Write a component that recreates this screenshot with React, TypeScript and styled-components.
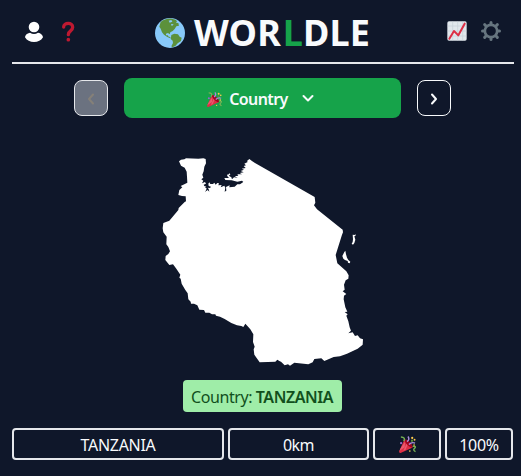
import React from "react";
import styled, { createGlobalStyle } from "styled-components";

const GlobalStyle = createGlobalStyle`
  * { box-sizing: border-box; }
  body {
    margin: 0;
    background: #0f172a;
    color: #f8fafc;
    font-family: "Segoe UI", "Noto Sans", "Open Sans", sans-serif;
    font-size: 16px;
    line-height: 24px;
    overflow: hidden;
  }
  button { font: inherit; color: inherit; margin: 0; padding: 0; }
  svg { display: block; flex: none; }
`;

const Page = styled.main`
  width: 521px;
  height: 476px;
  padding: 0 7px 0 12px;
  display: flex;
  flex-direction: column;
`;

const Header = styled.header`
  height: 64px;
  border-bottom: 2px solid #e5e7eb;
  display: flex;
  align-items: center;
`;

const IconGroup = styled.div<{ $side: "left" | "right" }>`
  width: 100px;
  display: flex;
  align-items: center;
  gap: ${(p) => (p.$side === "left" ? 17 : 14)}px;
  justify-content: ${(p) => (p.$side === "left" ? "flex-start" : "flex-end")};
  padding: ${(p) => (p.$side === "left" ? "1px 0 0 12px" : "0 13px 0 0")};
`;

const IconButton = styled.button`
  border: 0;
  background: none;
  display: flex;
`;

const Title = styled.h1`
  flex: 1;
  margin: 0;
  padding: 3px 0 0 43px;
  display: flex;
  align-items: center;
  gap: 9px;
  font-size: 36px;
  line-height: 40px;
  font-weight: 700;
  white-space: nowrap;
`;

const Wordmark = styled.span`
  letter-spacing: 0.1px;
`;

const Accent = styled.span`
  color: #16a34a;
  margin-left: 2px;
`;

const ModeBar = styled.nav`
  margin-top: 14px;
  padding-left: 62px;
  height: 40px;
  display: flex;
  align-items: center;
  gap: 16px;
`;

const StepButton = styled.button`
  width: 34px;
  height: 36px;
  border: 1px solid #f8fafc;
  border-radius: 8px;
  background: transparent;
  display: flex;
  align-items: center;
  justify-content: center;
  padding-top: 1px;
  &:disabled {
    background: #6b7280;
    border-color: #e5e7eb;
    color: #858078;
  }
`;

const ModeSelect = styled.button`
  width: 277px;
  height: 40px;
  border: 0;
  border-radius: 8px;
  background: #16a34a;
  display: flex;
  align-items: center;
  justify-content: center;
  padding: 2px 4px 0 0;
`;

const ModeLabel = styled.span`
  margin: 0 14px 0 7px;
  font-weight: 600;
  letter-spacing: -0.6px;
`;

const MapArea = styled.section`
  height: 230px;
  margin-top: 32px;
  padding-left: 143px;
`;

const AnswerRow = styled.div`
  display: flex;
  padding-left: 171px;
`;

const Answer = styled.div`
  width: 159px;
  height: 32px;
  border-radius: 4px;
  background: #9feda8;
  color: #11501c;
  padding: 5px 0 0 8px;
  white-space: nowrap;
  letter-spacing: -0.42px;
  strong { font-weight: 600; }
`;

const GuessRow = styled.div`
  margin-top: 16px;
  display: grid;
  grid-template-columns: 212px 141px 68px 68px;
  column-gap: 4px;
`;

const GuessCell = styled.div<{ $spacing?: number }>`
  height: 32px;
  border: 2px solid #e5e7eb;
  border-radius: 4px;
  display: flex;
  align-items: center;
  justify-content: center;
  padding-top: 1px;
  letter-spacing: ${(p) => p.$spacing ?? 0}px;
`;

const Party = ({ size }: { size: number }) => (
  <svg width={size} height={size} viewBox="0 0 36 36">
    <path fill="#dd2e44" d="M11.6 7.6c-.1.2-.3.3-.4.5L.2 32.9c-.5 1.2 1 3.4 3.2 2.9l24.5-11c.3-.1.4-.3.5-.5 1.1-1.8-1.4-6.5-5.6-10.8-4.3-4.2-9-6.7-11.2-5.9z" />
    <path fill="#ea596e" d="M13 12 4 25 .7 31.5 12 24zm5 0-9 19 5-2 5-13z" />
    <path fill="#a0041e" d="M23 13.2c4.2 4.3 6.6 9.1 5.4 10.7-1.8 1-6.6-1.3-10.8-5.6-4.3-4.2-6.7-9-5.5-10.6 1.8-1.2 6.6 1.2 10.9 5.5z" />
    <path fill="none" stroke="#77b255" strokeWidth="3" d="M4 2c7 0 9 4 6 9m19 11c6-1 7 1 4 4s-2 5 2 7" />
    <path fill="none" stroke="#aa8dd8" strokeWidth="3" d="M17 12c4-3 5-7 2-11m2 17c4-4 8-5 13-3" />
    <path fill="#5c913b" d="M25.5 8h4v4h-4z" />
    <circle cx="4.5" cy="15" r="2.5" fill="#9266cc" />
    <g fill="#ffcc4d">
      <circle cx="28" cy="4" r="2.3" />
      <circle cx="33" cy="8" r="2" />
      <circle cx="32" cy="19" r="1.7" />
      <circle cx="23" cy="32" r="1.7" />
    </g>
  </svg>
);

const Globe = () => (
  <svg width="30" height="30" viewBox="0 0 90 90">
    <circle cx="45" cy="45" r="45" fill="#88c9f9" />
    <path fill="#5c913b" d="M17 12C25 5 38 1 50 2l12 3 4 5-3 4 7 1 2 8-8 2-5 8-6 6-7 4-2 6-5-4-6 2 0 5 5 0 3 4 5 1 0 4-9-4-10-7-6-7-4-11-4-6 2-7z" />
    <path fill="#5c913b" d="m49 51 9-4 11 2 5 7 6 3-2 10-10 7-7 8-9 4-3-3 5-10-1-7-6-5 1-5z" />
    <path fill="#88c9f9" d="m41 8 8-2 3 5-8 3zm8 10 7 1-4 4-4-1z" />
  </svg>
);

const Chevron = ({ d, w, h }: { d: string; w: number; h: number }) => (
  <svg width={w} height={h} viewBox={`0 0 ${w} ${h}`} fill="none" stroke="currentColor" strokeWidth="2" strokeLinecap="round" strokeLinejoin="round">
    <path d={d} />
  </svg>
);

const Tanzania = () => (
  <svg width="215" height="220" viewBox="0 0 645 660" fill="#fff">
    <path d="M72 34 78 29 88 28 93 25 130 26 145 25 152 27 153 40 148 50 146 64 142 74 145 83 139 88 145 92 141 100 150 96 153 101 146 104 148 108 154 110 150 113 155 115 153 121 150 126 158 120 163 125 161 117 158 113 165 114 168 110 161 108 160 101 163 97 166 102 174 102 178 98 182 104 187 99 192 100 190 106 200 105 197 112 208 107 211 113 209 125 214 122 213 111 224 106 223 112 239 110 247 103 255 103 265 96 261 92 247 95 230 91 211 90 208 84 222 84 216 77 219 71 224 79 229 82 231 88 237 82 248 83 239 79 250 77 247 73 261 73 254 69 266 67 257 63 267 59 260 56 272 54 266 48 273 46 268 41 278 36 276 33 283 27 292 34 300 39 479 141 481 158 477 166 486 178 563 239 564 247 561 254 542 315 547 340 574 364 581 376 580 386 572 391 567 404 569 419 563 424 574 432 567 437 566 448 571 472 577 485 569 486 578 493 574 497 580 514 584 532 588 542 580 550 593 547 600 558 608 556 615 565 624 568 623 584 608 596 576 611 555 619 536 621 508 633 499 625 478 627 473 637 460 643 418 638 405 647 399 643 389 646 378 635 373 633 367 629 361 635 314 637 298 614 296 598 299 590 294 576 295 553 286 538 278 529 271 521 265 531 259 528 246 526 229 519 209 507 195 500 183 497 181 493 171 493 163 488 151 488 147 480 133 479 127 466 117 461 108 461 107 455 100 448 98 430 91 420 80 401 77 386 73 383 76 374 64 356 54 343 43 345 31 330 32 318 40 312 45 304 40 291 34 283 35 260 25 247 23 235 25 219 43 212 70 180 71 174 89 156 93 154 92 139 81 138 70 135 73 120 82 112 77 108 88 103 97 98 96 80 95 65 89 53 78 47Z" />
    <path d="m593 254 6 1 2-3 1 5-4 2 3 10-3 10-4 5-4-3 3-5 1-8zM562 318l6-12 3-4 2 11 3 10 4 7 6 5-2 5-5-2-1-5-8-3-5-4z" />
    <path d="m220 73 4-3 2 4-3 2z" />
  </svg>
);

export default function App() {
  return (
    <>
      <GlobalStyle />
      <Page>
        <Header>
          <IconGroup $side="left">
            <IconButton aria-label="Profile">
              <svg width="20" height="22" viewBox="0 0 60 66" fill="#fff">
                <circle cx="30" cy="18" r="16" />
                <path d="M18 35q12 8 24 0c11 2 15 10 15 14-6 10-15 14-27 14S9 59 3 49c0-6 5-12 15-14z" />
              </svg>
            </IconButton>
            <IconButton aria-label="How to play">
              <svg width="14" height="22" viewBox="0 0 42 66">
                <path fill="none" stroke="#be1931" strokeWidth="10" strokeLinecap="round" strokeLinejoin="round" d="M8 18C8 4 35 3 35 19 35 31 22 28 22 41" />
                <circle cx="22" cy="56" r="5.500" fill="#be1931" />
              </svg>
            </IconButton>
          </IconGroup>
          <Title>
            <Globe />
            <Wordmark>WOR<Accent>L</Accent>DLE</Wordmark>
          </Title>
          <IconGroup $side="right">
            <IconButton aria-label="Statistics">
              <svg width="20" height="20" viewBox="0 0 60 60">
                <rect x="1" y="1" width="58" height="58" rx="5" fill="#e1e8ed" />
                <path d="M17 2v56M32 2v56M47 2v56M2 15h56M2 30h56M2 45h56" stroke="#c5d0d8" strokeWidth="2" />
                <path d="M7 53 21 30 34 43 53 8" fill="none" stroke="#dd2e44" strokeWidth="6" strokeLinecap="round" strokeLinejoin="round" />
              </svg>
            </IconButton>
            <IconButton aria-label="Settings">
              <svg width="20" height="20" viewBox="0 0 60 60" fill="none" stroke="#66757f">
                <circle cx="30" cy="30" r="18.500" strokeWidth="8" />
                <path strokeWidth="9" strokeLinecap="round" d="M30 9V4.500M30 51v4.500M9 30H4.500M51 30h4.500M15 15l-4-4M45 45l4 4M15 45l-4 4M45 15l4-4" />
              </svg>
            </IconButton>
          </IconGroup>
        </Header>
        <ModeBar>
          <StepButton disabled aria-label="Previous">
            <Chevron w={8} h={12} d="M6 1.500 2 6l4 4.500" />
          </StepButton>
          <ModeSelect>
            <Party size={15} />
            <ModeLabel>Country</ModeLabel>
            <Chevron w={12} h={12} d="M1.500 3 6 7.500 10.500 3" />
          </ModeSelect>
          <StepButton aria-label="Next">
            <Chevron w={8} h={12} d="M2 1.500 6 6l-4 4.500" />
          </StepButton>
        </ModeBar>
        <MapArea>
          <Tanzania />
        </MapArea>
        <AnswerRow>
          <Answer>Country: <strong>TANZANIA</strong></Answer>
        </AnswerRow>
        <GuessRow>
          <GuessCell $spacing={-0.3}>TANZANIA</GuessCell>
          <GuessCell $spacing={-0.5}>0km</GuessCell>
          <GuessCell><Party size={17} /></GuessCell>
          <GuessCell $spacing={-0.3}>100%</GuessCell>
        </GuessRow>
      </Page>
    </>
  );
}
